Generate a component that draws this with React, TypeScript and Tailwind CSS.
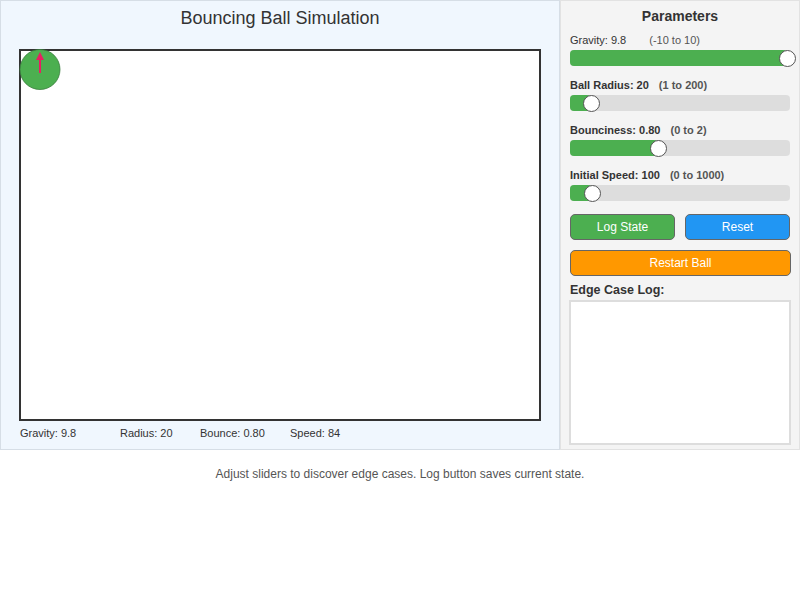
import React from "react";

type SliderProps = {
  label: string;
  range: string;
  bold: boolean;
  pct: number;
};

function Slider({ label, range, bold, pct }: SliderProps) {
  return (
    <div className="flex flex-col">
      <div className="flex h-[14px] items-center text-[11px] leading-[14px] text-[#333]">
        <span className={bold ? "font-bold" : "font-normal"}>{label}</span>
        <span className={bold ? "ml-[10px] text-[#555] font-bold" : "ml-[23px] text-[#555]"}>{range}</span>
      </div>
      <div className="relative mt-[3px] h-[16px] w-[220px] rounded-[4px] bg-[#dddddd]">
        <div className="absolute left-0 top-0 h-full rounded-[4px] bg-[#4caf50]" style={{ width: `${pct}px` }} />
        <div
          className="absolute h-[17px] w-[17px] rounded-full border border-[#555] bg-white"
          style={{ left: `${pct - 8.5}px`, top: "-0.5px" }}
        />
      </div>
    </div>
  );
}

export default function App() {
  return (
    <div className="w-[800px] font-['Liberation_Sans',Arial,sans-serif]">
      <div className="flex h-[450px] w-[800px]">
        <div className="flex h-[450px] w-[560px] flex-col border border-[#d6dee6] bg-[#f0f7fe]">
          <div className="pt-[6px] text-center text-[18px] leading-[22px] text-[#333]">Bouncing Ball Simulation</div>
          <div className="relative ml-[18px] mt-[20px] h-[372px] w-[522px] border-2 border-[#333] bg-white">
            <svg className="absolute left-0 top-0 overflow-visible" width="518" height="368">
              <circle cx="19" cy="18.5" r="20" fill="#4caf50" stroke="#3a7d3d" strokeWidth="0.8" />
              <line x1="19" y1="22" x2="19" y2="6" stroke="#e91e63" strokeWidth="2" />
              <polygon points="19,1 15,9 23,9" fill="#e91e63" />
            </svg>
          </div>
          <div className="ml-[19px] mt-[5px] flex text-[11px] leading-[14px] text-[#333]">
            <span className="w-[100px]">Gravity: 9.8</span>
            <span className="w-[80px]">Radius: 20</span>
            <span className="w-[90px]">Bounce: 0.80</span>
            <span>Speed: 84</span>
          </div>
        </div>
        <div className="flex h-[450px] w-[240px] flex-col border border-[#e2e2e2] bg-[#f4f4f4] px-[9px]">
          <div className="pt-[6px] text-center text-[14px] font-bold leading-[18px] text-[#333]">Parameters</div>
          <div className="mt-[8px] flex flex-col gap-[12px]">
            <Slider label="Gravity: 9.8" range="(-10 to 10)" bold={false} pct={217} />
            <Slider label="Ball Radius: 20" range="(1 to 200)" bold={true} pct={21} />
            <Slider label="Bounciness: 0.80" range="(0 to 2)" bold={true} pct={88} />
            <Slider label="Initial Speed: 100" range="(0 to 1000)" bold={true} pct={22} />
          </div>
          <div className="mt-[13px] flex gap-[10px]">
            <button className="h-[26px] w-[106px] rounded-[5px] border border-[#666] bg-[#4caf50] text-[12px] text-white">Log State</button>
            <button className="h-[26px] w-[106px] rounded-[5px] border border-[#666] bg-[#2196f3] text-[12px] text-white">Reset</button>
          </div>
          <button className="mt-[10px] h-[26px] w-[221px] rounded-[5px] border border-[#666] bg-[#ff9800] text-[12px] text-white">Restart Ball</button>
          <div className="mt-[6px] text-[12.5px] font-bold leading-[16px] text-[#333]">Edge Case Log:</div>
          <div className="-ml-[1px] mt-[2px] h-[145px] w-[222px] border-2 border-[#dddddd] bg-white" />
        </div>
      </div>
      <div className="pt-[17px] text-center text-[12px] leading-[14px] text-[#555]">
        Adjust sliders to discover edge cases. Log button saves current state.
      </div>
    </div>
  );
}
